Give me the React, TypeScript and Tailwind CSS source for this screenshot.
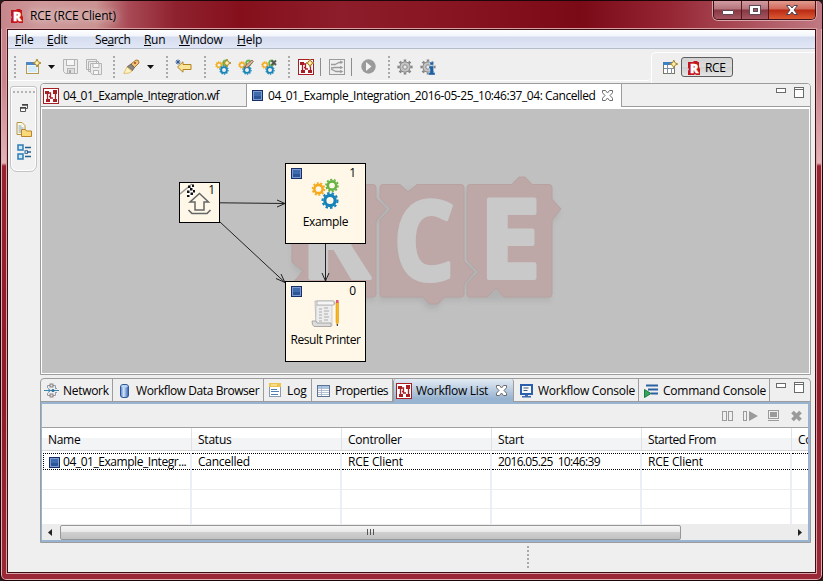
import React from "react";

type KidProps = { className?: string; children?: React.ReactNode };

/* ---------- icons ---------- */

const RceLogo = ({ className = "w-[14px] h-[16px]" }: KidProps) => (
  <svg className={className} viewBox="0 0 14 16">
    <path d="M1 2h5l1-1h3l1 1h1v5l1 2v6H9l-1-1-1 1H1v-4l1-2-1-1z" fill="#c4161c" />
    <text x="3" y="13" fontFamily="Open Sans, sans-serif" fontWeight="800" fontSize="13" fill="#fff" stroke="#fff" strokeWidth=".4" textLength="8.500" lengthAdjust="spacingAndGlyphs">R</text>
  </svg>
);

const WfIcon = ({ star = false }: { star?: boolean }) => (
  <svg className="h-4 w-4 shrink-0" viewBox="0 0 16 16">
    <rect x=".5" y=".5" width="15" height="15" fill="#fff" stroke="#a81e25" />
    <path d="M2 3h4v3H2zM10 2h4v4h-4zM3 11h4v3H3zM10 11h4v3h-4z" fill="#a81e25" />
    <path d="M4.500 6v5M6 5h1.500v5H10M12.500 6v5M6 8.500h2" stroke="#a81e25" strokeWidth="1.300" fill="none" />
    {star && <Star x={12} y={4} />}
  </svg>
);

const Star = ({ x, y }: { x: number; y: number }) => (
  <g transform={`translate(${x} ${y})`}>
    <path d="M0-4L1.2-1.2 4 0 1.2 1.2 0 4-1.2 1.2-4 0-1.2-1.2z" fill="#fff3b0" stroke="#a9842a" strokeWidth="1" />
  </g>
);

const BlueStop = () => (
  <svg className="h-[11px] w-[11px] shrink-0" viewBox="0 0 11 11">
    <rect x=".5" y=".5" width="10" height="10" fill="#2b5597" stroke="#152e66" />
    <rect x="1.5" y="1.5" width="8" height="8" fill="none" stroke="#7d9bd0" />
    <rect x="2" y="2" width="7" height="4" fill="#3f6bad" />
  </svg>
);

const CloseX = ({ fill = "#fff" }: { fill?: string }) => (
  <svg className="h-[11px] w-[11px] shrink-0" viewBox="0 0 11 11">
    <path d="M.5.5h3l2 2.5L7.5.5h3v2.3L8 5.5l2.500 2.700v2.300h-3L5.500 8l-2 2.500h-3V8.200L3 5.500.5 2.800z" fill={fill} stroke="#6b6b6b" />
  </svg>
);

const Cog = ({ x, y, s, color }: { x: number; y: number; s: number; color: string }) => (
  <g transform={`translate(${x} ${y}) scale(${s})`} fill="none" stroke={color}>
    <circle r="4.500" strokeWidth="2.800" />
    <circle r="6.500" strokeWidth="1.800" pathLength="20" strokeDasharray="1.100 .9" />
  </g>
);

const Gears = ({ kind }: { kind: "add" | "edit" | "remove" }) => (
  <svg className="h-4 w-4" viewBox="0 0 16 16">
    <Cog x={4} y={6} s={0.52} color="#f4ac1c" />
    <Cog x={10.500} y={4} s={0.5} color="#66b245" />
    <Cog x={9} y={11} s={0.64} color="#1684b8" />
    {kind === "add" && <Star x={12} y={4} />}
    {kind === "edit" && <path d="M7 9l1-3 6-5 1.500 1.500L10 8z" fill="#d8b098" stroke="#8d5a45" strokeWidth=".8" />}
    {kind === "remove" && <path d="M10.500 1.500l4.500 4.500M15 1.500L10.500 6" stroke="#555" strokeWidth="1.800" />}
  </svg>
);

const GrayGear = ({ info = false }: { info?: boolean }) => (
  <svg className="h-4 w-4" viewBox="0 0 16 16">
    <g transform="translate(8 8)">
      <circle r="6.500" fill="none" stroke="#858585" strokeWidth="2.200" pathLength="16" strokeDasharray="1 1" strokeDashoffset=".5" />
      <circle r="5.200" fill="#c4c4c4" stroke="#858585" />
      <circle r="2.200" fill="#e8e8e8" stroke="#8a8a8a" />
    </g>
    {info && <path d="M10 3h3.500v3H10zM9 7h4.500v6.500H15V16H8.500v-2.500H10V9.500H9z" fill="#1b5fa5" stroke="#dfe9f2" strokeWidth=".4" />}
  </svg>
);

const NewIcon = () => (
  <svg className="h-4 w-[15px]" viewBox="0 0 15 16">
    <rect x=".5" y="3.500" width="12" height="11" fill="#eef6fc" stroke="#b89a4e" />
    <rect x="0" y="3" width="11" height="3" fill="#4a86c8" />
    <path d="M2 7h9v6H2z" fill="#d6ebf9" />
    <Star x={11} y={4} />
  </svg>
);

const SaveIcon = () => (
  <svg className="h-[15px] w-[15px]" viewBox="0 0 15 15">
    <path d="M.5.5h14v14H2.500l-2-2z" fill="#ececec" stroke="#b4b4b4" />
    <rect x="3.500" y=".5" width="8" height="6" fill="#f6f6f6" stroke="#b4b4b4" />
    <rect x="4.500" y="9.500" width="7" height="5" fill="#dedede" stroke="#b4b4b4" />
    <path d="M6 11h2v3H6z" fill="#aaa" />
  </svg>
);

const SaveAllIcon = () => (
  <svg className="h-4 w-4" viewBox="0 0 16 16">
    <path d="M.5.5h10v10H.5zM2.500 2.500h10v10h-10z" fill="#ececec" stroke="#b4b4b4" />
    <path d="M4.500 4.500h11v11h-9l-2-2z" fill="#ececec" stroke="#b4b4b4" />
    <path d="M7 4.500h6v4H7zM7.500 11.500h5v4h-5z" fill="#f8f8f8" stroke="#b4b4b4" />
  </svg>
);

const TorchIcon = () => (
  <svg className="h-4 w-[17px]" viewBox="0 0 17 16">
    <path d="M8 5l5-4 2.500.5.5 2.500-5 5z" fill="#f1c27c" stroke="#a9762f" />
    <path d="M4 8l4-3 3.500 3.500L9 12z" fill="#8a847e" stroke="#6e655b" />
    <path d="M4 8L.8 14.500 6 14l3-2z" fill="#fff2bf" stroke="#d9b25c" strokeWidth=".8" />
    <circle cx="12" cy="4" r="1" fill="#a5461e" />
  </svg>
);

const BackIcon = () => (
  <svg className="h-[15px] w-[17px]" viewBox="0 0 17 15">
    <path d="M2.500 8L8 2.800V5.500h8v5H8v2.700z" fill="#fbe39a" stroke="#b08421" />
    <path d="M3 .5v5M.5 3h5M1.200 1.200l3.600 3.600M4.800 1.200L1.200 4.800" stroke="#274f8f" strokeWidth=".9" />
  </svg>
);

const CondIcon = () => (
  <svg className="h-4 w-4" viewBox="0 0 16 16">
    <rect x=".5" y=".5" width="15" height="15" fill="#efefef" stroke="#9b9b9b" />
    <path d="M2 5.500h4l4-2h3M2 9l4-.5h7M2 10l5 2.500h6" stroke="#9b9b9b" fill="none" strokeWidth="1.300" />
    <path d="M11 1.500l3.500 1.500-3 2zM11 7l3.500 1.500L11 10zM11 11l3.500 1.500L11 14z" fill="#9b9b9b" />
  </svg>
);

const RunIcon = () => (
  <svg className="h-[15px] w-[15px]" viewBox="0 0 15 15">
    <circle cx="7.500" cy="7.500" r="7.200" fill="#9a9a9a" />
    <path d="M5 3l5.500 4.500L5 12z" fill="#f4f4f4" />
  </svg>
);

const PerspectiveIcon = () => (
  <svg className="h-[15px] w-[15px]" viewBox="0 0 15 15">
    <rect x=".5" y="2.500" width="11" height="11" fill="#fff" stroke="#7b7866" />
    <rect x="0" y="2" width="9" height="3" fill="#3f7fc4" />
    <path d="M4.500 5v9M1 8.500h11M8.500 8.500V14" stroke="#7b8fa0" fill="none" />
    <Star x={10.800} y={4} />
  </svg>
);

const NetworkIcon = () => (
  <svg className="h-[15px] w-[15px]" viewBox="0 0 15 15">
    <path d="M3.500 5V2.500H6M11.500 5V2.500H9M3.500 10v2.500H6M11.500 10v2.500H9" stroke="#8f9fae" fill="none" />
    <path d="M0 7.500h15" stroke="#3d85ad" fill="none" />
    <path d="M4 5.500l2.500 2-2.500 2" stroke="#3d85ad" fill="none" />
    <rect x="6" y="1" width="3" height="3" fill="#ddd" stroke="#7c6a66" strokeWidth=".8" />
    <rect x="6" y="11" width="3" height="3" fill="#ddd" stroke="#7c6a66" strokeWidth=".8" />
    <circle cx="9" cy="7.500" r="1.500" fill="#246c99" />
    <path d="M11 5.500h2M11 9.500h2" stroke="#8f9fae" />
  </svg>
);

const DbIcon = () => (
  <svg className="h-[14px] w-[9px]" viewBox="0 0 9 14">
    <defs>
      <linearGradient id="db" x1="0" x2="1">
        <stop offset="0" stopColor="#4a7dc8" /><stop offset=".4" stopColor="#d5e5fa" /><stop offset="1" stopColor="#2c5cae" />
      </linearGradient>
    </defs>
    <rect x=".5" y=".5" width="8" height="13" rx="2.500" fill="url(#db)" stroke="#2e5697" />
    <ellipse cx="4.500" cy="2.300" rx="3.300" ry="1.200" fill="#bcd5f5" />
  </svg>
);

const LogIcon = () => (
  <svg className="h-[15px] w-[12px]" viewBox="0 0 12 15">
    <rect x=".5" y=".5" width="11" height="13" fill="#fff" stroke="#8b9cae" />
    <path d="M0 0h12v4H0z" fill="#edc54d" />
    <path d="M2 2h6" stroke="#fff6cf" />
    <path d="M2 6.500h6M2 8.500h8M2 11.500h7" stroke="#4d7fb5" />
  </svg>
);

const PropIcon = () => (
  <svg className="h-[12px] w-[13px]" viewBox="0 0 13 12">
    <rect x=".5" y=".5" width="12" height="11" fill="#fff" stroke="#5e7391" />
    <path d="M1 1h11v2H1z" fill="#a9c4e4" />
    <path d="M1 3.500h11M1 5.500h11M1 7.500h11M1 9.500h11M4.500 1v10" stroke="#9fb1c7" strokeWidth=".8" />
  </svg>
);

const ConsoleIcon = () => (
  <svg className="h-[14px] w-[13px]" viewBox="0 0 13 14">
    <rect x="1" y="1" width="11" height="9" fill="#f4f8fd" stroke="#2d5faf" strokeWidth="2" />
    <path d="M3.500 4h5M3.500 6.500h4" stroke="#44576f" />
    <path d="M5 10.500h3v1.500h3v1.500H2V12h3z" fill="#3c69ac" />
  </svg>
);

const CommandIcon = () => (
  <svg className="h-[14px] w-[15px]" viewBox="0 0 15 14">
    <path d="M2 1.500h12M4 5.500h10M7 9.500h7" stroke="#2c62a3" strokeWidth="2" />
    <path d="M.5 5.500L7 9.500l-6.500 4z" fill="#37a35f" stroke="#1e7a40" />
  </svg>
);

const MinMax = () => (
  <div className="ml-auto flex gap-[8px] pr-[6px] pt-[3px]">
    <div className="mt-px h-[5px] w-[10px] border border-[#6a6a6a] bg-white" />
    <div className="h-[11px] w-[10px] border border-t-[3px] border-[#6a6a6a] border-t-[#6a6a6a] bg-white">
      <div className="-mt-[2px] h-px bg-white" />
    </div>
  </div>
);

/* ---------- title bar ---------- */

const TitleBar = () => (
  <div className="flex h-[29px] items-start bg-[linear-gradient(90deg,#c5868b_0px,#cf999a_40px,#cb9392_95px,#a84955_128px,#8f212e_175px,#85101c_240px,#8d1d2a_340px,#861420_470px,#7a0a16_580px,#962634_670px,#c07a83_823px)]">
    <div className="flex h-full flex-1 items-center pl-[9px] pt-[2px]">
      <RceLogo />
      <span className="ml-[6px] tracking-[-0.17px] [text-shadow:0_0_6px_#fff9,0_0_10px_#fff9]">RCE (RCE Client)</span>
    </div>
    <div className="mr-[6px] flex h-[20px] w-[103px] overflow-hidden rounded-b-[5px] border border-t-0 border-[#3e1218] shadow-[0_0_0_1px_#d9a5aa]">
      <div className="flex w-[28px] items-center justify-center border-r border-[#4d1a20] bg-[linear-gradient(#d5a1a6_0%,#b4747b_48%,#873642_52%,#a65661_100%)]">
        <div className="mt-[6px] h-[5px] w-[12px] rounded-[1px] border border-[#5b4a55] bg-white" />
      </div>
      <div className="flex w-[27px] items-center justify-center border-r border-[#4d1a20] bg-[linear-gradient(#d5a1a6_0%,#b4747b_48%,#873642_52%,#a65661_100%)]">
        <div className="flex h-[10px] w-[12px] items-center justify-center border border-[#5b4a55] bg-white">
          <div className="h-[4px] w-[5px] border border-[#5b4a55] bg-[#9b5a62]" />
        </div>
      </div>
      <div className="flex flex-1 items-center justify-center bg-[linear-gradient(#e4a196_0%,#d0685a_48%,#b92812_52%,#dc5a34_100%)]">
        <svg className="h-[10px] w-[12px]" viewBox="0 0 12 10">
          <path d="M.5.5h3.500L6 3 8 .5h3.500L8 5l3.500 4.500H8L6 7 4 9.500H.5L4 5z" fill="#fff" stroke="#4d4450" />
        </svg>
      </div>
    </div>
  </div>
);

/* ---------- menu and tool bars ---------- */

const MenuItem = ({ className, children }: KidProps) => <div className={className}>{children}</div>;

const MenuBar = () => (
  <div className="flex h-[19px] items-center border-b border-[#b5bccc] bg-[linear-gradient(#ffffff_0px,#f2f5fb_6px,#d5dcef_7px,#e1e7f5_18px)] pl-[7px] pt-[2px]">
    <MenuItem className="w-[32px] tracking-[-0.1px]"><u>F</u>ile</MenuItem>
    <MenuItem className="w-[48px] tracking-[-0.3px]"><u>E</u>dit</MenuItem>
    <MenuItem className="w-[49px] tracking-[-0.45px]">Se<u>a</u>rch</MenuItem>
    <MenuItem className="w-[35px] tracking-[-0.3px]"><u>R</u>un</MenuItem>
    <MenuItem className="w-[58px] tracking-[-0.3px]"><u>W</u>indow</MenuItem>
    <MenuItem className="tracking-[-0.2px]"><u>H</u>elp</MenuItem>
  </div>
);

const Grip = ({ className = "" }: KidProps) => (
  <div className={`shrink-0 h-[22px] w-[2px] bg-[repeating-linear-gradient(#a9a9a9_0px,#a9a9a9_2px,transparent_2px,transparent_4px)] ${className}`} />
);

const Caret = () => (
  <svg className="h-[4px] w-[7px]" viewBox="0 0 7 4"><path d="M0 0h7L3.500 4z" fill="#111" /></svg>
);

const Slot = ({ className, children }: KidProps) => (
  <div className={`flex shrink-0 items-center ${className}`}>{children}</div>
);

const ToolBar = () => (
  <div className="flex h-[34px]">
    <div className="flex h-[32px] w-[643px] items-center rounded-br-[4px] border-b border-white pl-[6px] pt-[4px]">
      <Slot className="w-[12px]"><Grip /></Slot>
      <Slot className="w-[22px]"><NewIcon /></Slot>
      <Slot className="w-[15px]"><Caret /></Slot>
      <Slot className="w-[23px]"><SaveIcon /></Slot>
      <Slot className="w-[27px]"><SaveAllIcon /></Slot>
      <Slot className="w-[10px]"><Grip /></Slot>
      <Slot className="w-[24px]"><TorchIcon /></Slot>
      <Slot className="w-[19px]"><Caret /></Slot>
      <Slot className="w-[9px]"><Grip /></Slot>
      <Slot className="w-[29px]"><BackIcon /></Slot>
      <Slot className="w-[11px]"><Grip /></Slot>
      <Slot className="w-[23px]"><Gears kind="add" /></Slot>
      <Slot className="w-[23px]"><Gears kind="edit" /></Slot>
      <Slot className="w-[27px]"><Gears kind="remove" /></Slot>
      <Slot className="w-[10px]"><Grip /></Slot>
      <Slot className="w-[22px]"><WfIcon star /></Slot>
      <Slot className="w-[9px]"><div className="h-[18px] w-px bg-[#8d8d8d]" /></Slot>
      <Slot className="w-[22px]"><CondIcon /></Slot>
      <Slot className="w-[10px]"><div className="h-[18px] w-px bg-[#8d8d8d]" /></Slot>
      <Slot className="w-[27px]"><RunIcon /></Slot>
      <Slot className="w-[9px]"><Grip /></Slot>
      <Slot className="w-[23px]"><GrayGear /></Slot>
      <Slot className="w-[16px]"><GrayGear info /></Slot>
    </div>
    <div className="mt-[3px] flex flex-1 items-start rounded-tl-[5px] border-l border-t border-white pl-[11px] pt-[4px]">
      <div className="mt-[3px]"><PerspectiveIcon /></div>
      <div className="ml-[3px] flex h-[20px] w-[52px] items-center rounded-[3px] border border-[#5e5e5e] bg-[linear-gradient(#d2d2d2,#dcdcdc_50%,#cfcfcf_52%,#e6e6e6)] pl-[5px]">
        <div className="mt-[2px]"><RceLogo /></div>
        <span className="ml-[4px] mt-px tracking-[-0.4px]">RCE</span>
      </div>
    </div>
  </div>
);

/* ---------- left trim ---------- */

const FastView = () => (
  <div className="ml-[2px] mt-[3px] flex h-[86px] w-[27px] shrink-0 flex-col items-center rounded-[7px] rounded-t-[3px] border border-[#c3c3c3] bg-[#f1f1f1] shadow-[inset_0_0_0_1px_#fff]">
    <div className="mt-[4px] h-[2px] w-[22px] bg-[repeating-linear-gradient(90deg,#b5b5b5_0px,#b5b5b5_2px,transparent_2px,transparent_4px)]" />
    <svg className="mt-[11px] h-[8px] w-[8px]" viewBox="0 0 8 8">
      <path d="M2.500 1h5v3.500H6" fill="none" stroke="#555" /><path d="M2 .8h6" stroke="#444" strokeWidth="1.500" />
      <path d="M.5 4h5v3.500h-5z" fill="#fff" stroke="#555" /><path d="M0 3.800h6" stroke="#444" strokeWidth="1.500" />
    </svg>
    <svg className="mt-[10px] h-[16px] w-[16px]" viewBox="0 0 16 16">
      <path d="M1 .5h5l3 3v9H1z" fill="#fffbe8" stroke="#b49543" />
      <path d="M2.500 4h3M2.500 6h5M2.500 8h4M2.500 10h3" stroke="#7d9cc0" />
      <path d="M5.500 14.500v-7h4l1 1.500h5v5.500z" fill="#fcd978" stroke="#b9862c" />
    </svg>
    <svg className="mt-[6px] h-[16px] w-[14px]" viewBox="0 0 14 16">
      <rect x="1" y="1" width="5" height="5" fill="#cfe9fa" stroke="#2d7cb5" strokeWidth="1.500" />
      <rect x="1" y="10" width="5" height="5" fill="#cfe9fa" stroke="#2d7cb5" strokeWidth="1.500" />
      <path d="M8 3.500h6M8 12.500h6M11 8h3" stroke="#235f91" strokeWidth="1.400" />
      <rect x="8" y="6.800" width="2.500" height="2.500" fill="#fff" stroke="#235f91" />
    </svg>
  </div>
);

/* ---------- workflow editor ---------- */

const Watermark = () => (
  <g>
    <g fill="#9a9a9a" opacity=".35" style={{ filter: "blur(2.5px)" }} transform="translate(-1 4)">
      <path d="M293 186H376V198L386 209L376 221V297H293V283L303 271L293 263zM380 186H464V260L474 272L464 284V297H444L438 305H428L422 297H380zM467 186H512L519 177H526L532 186H552V198L561 209L552 221V297H467z" />
    </g>
    <g fill="#bda7a7" stroke="#b8a1a1" strokeWidth="1" strokeLinejoin="round">
      <path d="M295 184.500H373Q376 184.500 376 187.500V198L386 209L376 221V294Q376 297 373 297H295Q292 297 292 294V284L303 271L292 262V187.500Q292 184.500 295 184.500z" />
      <path d="M383 184.500H400L408 192L417 184.500H461Q464 184.500 464 187.500V261L474 272L464 284V294Q464 297 461 297H444L438 304H429L423 297H383Q380 297 380 294V220L391 209L380 198V187.500Q380 184.500 383 184.500z" />
      <path d="M470 184.500H512L519 177H525L532 184.500H549Q552 184.500 552 187.500V199L561 209L552 220V294Q552 297 549 297H504L496 288L487 297H470Q467 297 467 294V284L479 272L467 260V187.500Q467 184.500 470 184.500z" />
    </g>
    <g fontFamily="Open Sans, sans-serif" fontWeight="700" fill="#c9c9c9" stroke="#c9c9c9" strokeWidth="4" strokeLinejoin="round" fontSize="110">
      <text x="301" y="278" textLength="69" lengthAdjust="spacingAndGlyphs">R</text>
      <text x="393.500" y="279.500" textLength="61" lengthAdjust="spacingAndGlyphs">C</text>
      <text x="479" y="277.500" textLength="62" lengthAdjust="spacingAndGlyphs">E</text>
    </g>
  </g>
);

const BigNode = ({ className, count, label, children }: KidProps & { count: number; label: React.ReactNode }) => (
  <div className={`absolute h-[81px] w-[81px] border border-black bg-[#fff8e9] ${className}`}>
    <div className="flex h-[14px] items-start justify-between pl-[5px] pr-[9px]">
      <div className="pt-[4px]"><BlueStop /></div>
      <span className="leading-[17px]">{count}</span>
    </div>
    <div className="flex h-[34px] justify-center">{children}</div>
    <div className="whitespace-nowrap text-center leading-[20px]">{label}</div>
  </div>
);

const Canvas = () => (
  <div className="relative mx-[1px] mb-[1px] mt-[2px] h-[263px] flex-1 overflow-hidden bg-[#c0c0c0]">
    <svg className="absolute left-0 top-0 h-[263px] w-[767px]" viewBox="42 109 767 263">
      <Watermark />
      <g stroke="#222" fill="none" strokeWidth="1">
        <path d="M220 202.800L285 203.500M277 200l8 3.500-8 3.500" />
        <path d="M220 222L285 282.500M276 278.500l9 4-4-8.500" />
        <path d="M325.500 244V281M322 273l3.500 8 3.500-8" />
      </g>
    </svg>
    <div className="absolute left-[137px] top-[73px] h-[41px] w-[41px] border border-black bg-[#fff8e9]">
      <svg className="absolute left-0 top-0 h-[39px] w-[39px]" viewBox="0 0 39 39">
        <path d="M0 11L12 1" stroke="#999" strokeWidth="1.500" />
        <path d="M8 3l6-1-1 4 2 3-3 5-5-1 1-5z" fill="#fff" />
        <path d="M8 2.500h2.500V5H8zM12 1.500h2V4h-2zM10 5h2.500v2.500H10zM13 7h2v2.500h-2zM7 7.500h2.500V10H7zM10.500 9.500H13V12h-2.500zM7 12h2.500v2H7z" fill="#111" />
        <path d="M19.500 10.500L28.500 19H24v8h-9v-8h-5z" fill="#fff8e9" stroke="#666" strokeWidth="1.500" />
        <path d="M8.500 27l3.500 3.500h15l3.500-3.500" fill="none" stroke="#666" strokeWidth="1.700" />
      </svg>
      <span className="absolute right-[4px] top-[-2px] leading-[17px]">1</span>
    </div>
    <BigNode className="left-[243px] top-[54px]" count={1} label={<span className="tracking-[-0.35px]">Example</span>}>
      <svg className="h-[34px] w-[34px]" viewBox="0 0 34 34">
        <Cog x={9.500} y={11} s={0.92} color="#f6a91d" />
        <Cog x={23} y={7.500} s={0.92} color="#68b345" />
        <Cog x={21} y={22.500} s={1.150} color="#1684ba" />
      </svg>
    </BigNode>
    <BigNode className="left-[243px] top-[172px]" count={0} label={<span className="tracking-[-0.45px]">Result Printer</span>}>
      <svg className="h-[34px] w-[34px]" viewBox="0 0 34 34">
        <path d="M6 5h18q2 0 2 3H9v20H7z" fill="#e9e9e9" stroke="#b0b0b0" strokeWidth=".8" />
        <path d="M7 9h16v21H7z" fill="#ededed" stroke="#c5c5c5" strokeWidth=".8" />
        <path d="M8 5h17v4H8z" fill="#f6f6f6" stroke="#aaa" strokeWidth=".8" />
        <path d="M3 25h4l1 2h14v3.500H5q-2-1-2-5.500z" fill="#dcdcdc" stroke="#9a9a9a" strokeWidth=".8" />
        <path d="M10 13h3M15 12h4M10 16h3M15 15h5M10 19h3M15 18h4M10 22h3M15 21h5M10 25h3M15 24h4" stroke="#aaa" />
        <path d="M27 6h2.500v20l-1.200 3L27 26z" fill="#f6b81e" stroke="#d18c14" strokeWidth=".5" />
        <path d="M27 4h2.500v3H27z" fill="#e0566c" /><path d="M27.800 28h1v2h-1z" fill="#222" />
      </svg>
    </BigNode>
  </div>
);

const Editor = () => (
  <div className="flex h-[292px] flex-col rounded-t-[4px] border border-[#9c9c9c] bg-white">
    <div className="flex h-[23px] shrink-0 rounded-t-[3px] border-b border-[#9c9c9c] bg-[#efefef]">
      <div className="flex w-[205px] items-center pl-[2px] pt-px">
        <WfIcon />
        <span className="ml-[4px] tracking-[-0.47px]">04_01_Example_Integration.wf</span>
      </div>
      <div className="-mb-px flex w-[376px] items-center border-x border-[#9c9c9c] bg-white pl-[5px]">
        <BlueStop />
        <span className="ml-[5px] w-[334px] whitespace-nowrap tracking-[-0.43px]">04_01_Example_Integration_2016-05-25_10:46:37_04: Cancelled</span>
        <CloseX />
      </div>
      <MinMax />
    </div>
    <Canvas />
  </div>
);

/* ---------- bottom views ---------- */

const ViewTab = ({ className, children }: KidProps) => (
  <div className={`flex shrink-0 items-center whitespace-nowrap border-r border-[#9c9c9c] pt-px ${className}`}>{children}</div>
);

const Icon = ({ className, children }: KidProps) => <div className={`shrink-0 ${className}`}>{children}</div>;

const ViewTabs = () => (
  <div className="flex h-[23px] shrink-0 rounded-t-[3px] border-b border-[#9c9c9c]">
    <ViewTab className="w-[72px] pl-[3px] tracking-[-0.3px]"><Icon className="w-[19px]"><NetworkIcon /></Icon>Network</ViewTab>
    <ViewTab className="w-[151px] pl-[7px] tracking-[-0.43px]"><Icon className="w-[16px]"><DbIcon /></Icon>Workflow Data Browser</ViewTab>
    <ViewTab className="w-[48px] pl-[5px] tracking-[-0.1px]"><Icon className="w-[18px]"><LogIcon /></Icon>Log</ViewTab>
    <ViewTab className="w-[81px] pl-[5px] tracking-[-0.5px]"><Icon className="w-[18px]"><PropIcon /></Icon>Properties</ViewTab>
    <ViewTab className="-mb-px w-[121px] rounded-t-[3px] border-l bg-[linear-gradient(#e3ebf4,#99b4d1_85%)] pb-px pl-[2px] tracking-[-0.26px]">
      <Icon className="w-[20px]"><WfIcon /></Icon><span className="w-[80px]">Workflow List</span><CloseX />
    </ViewTab>
    <ViewTab className="w-[125px] pl-[6px] tracking-[-0.26px]"><Icon className="w-[18px]"><ConsoleIcon /></Icon>Workflow Console</ViewTab>
    <ViewTab className="w-[131px] pl-[5px] tracking-[-0.22px]"><Icon className="w-[19px]"><CommandIcon /></Icon>Command Console</ViewTab>
    <MinMax />
  </div>
);

const ViewToolbar = () => (
  <div className="flex h-[24px] shrink-0 items-center border-b border-[#a0a0a0] bg-[#efefef] pl-[680px]">
    <svg className="h-[12px] w-[84px]" viewBox="0 0 84 12">
      <g fill="none" stroke="#9a9a9a">
        <rect x=".5" y="1.500" width="4" height="9" /><rect x="6.500" y="1.500" width="4" height="9" />
        <rect x="21.500" y="1.500" width="3" height="9" />
      </g>
      <path d="M27 1l9 5-9 5z" fill="#9a9a9a" />
      <rect x="46.500" y=".5" width="10" height="8" fill="#efefef" stroke="#9a9a9a" />
      <rect x="48" y="2" width="7" height="5" fill="#9a9a9a" /><path d="M46 10.500h11" stroke="#9a9a9a" />
      <path d="M70.500 2l8 8M78.500 2l-8 8" stroke="#9a9a9a" strokeWidth="3.800" />
    </svg>
  </div>
);

const columns = ["Name", "Status", "Controller", "Start", "Started From", "Co"];
const record = ["04_01_Example_Integr...", "Cancelled", "RCE Client", "2016.05.25  10:46:39", "RCE Client", ""];
const tracking = ["tracking-[-0.45px]", "tracking-[-0.26px]", "tracking-[-0.2px]", "tracking-[-0.65px]", "tracking-[-0.2px]", ""];
const headTracking = ["tracking-[-0.3px]", "tracking-[-0.22px]", "tracking-[-0.25px]", "tracking-[-0.2px]", "tracking-[-0.45px]", "tracking-[-0.4px]"];
const grid = "grid grid-cols-[150px_150px_150px_150px_150px_16px]";
const cell = "border-r-2 border-[#e9eef7] last:border-r-0";

const Table = () => (
  <div className="h-[96px] shrink-0 overflow-hidden bg-white">
    <div className={`${grid} mb-px h-[23px] border-b border-[#d5d5d5] bg-[linear-gradient(#ffffff_45%,#f3f4f6_46%,#f3f4f6)]`}>
      {columns.map((c, i) => (
        <div key={i} className={`overflow-hidden whitespace-nowrap border-r border-[#dfe1e5] last:border-r-0 pl-[6px] pt-[4px] leading-[16px] ${headTracking[i]}`}>{c}</div>
      ))}
    </div>
    <div className={`${grid} h-[19px] pt-px`}>
      {record.map((c, i) => (
        <div key={i} className={cell}>
          <div className={`flex h-[17px] items-center overflow-hidden whitespace-pre border-y border-dotted border-black pt-px ${tracking[i]} ${i === 0 ? "ml-px border-l pl-[5px]" : "pl-[6px]"}`}>
            {i === 0 && <div className="mr-[3px]"><BlueStop /></div>}
            {c}
          </div>
        </div>
      ))}
    </div>
    {[0, 1, 2].map((r) => (
      <div key={r} className={`${grid} h-[19px] border-b border-[#ededed]`}>
        {columns.map((c) => <div key={c} className={cell} />)}
      </div>
    ))}
  </div>
);

const HScroll = () => (
  <div className="flex h-[16px] shrink-0 items-center bg-[#ececec]">
    <div className="flex w-[18px] justify-center pr-[2px]"><svg className="h-[7px] w-[4px]" viewBox="0 0 4 7"><path d="M4 0v7L0 3.500z" fill="#222" /></svg></div>
    <div className="flex h-[15px] w-[621px] items-center justify-center gap-[2px] rounded-[2px] border border-[#979797] bg-[linear-gradient(#f5f5f5,#e8e8e8_48%,#cfcfcf_50%,#c2c2c2)]">
      <div className="h-[6px] w-px bg-[#555]" /><div className="h-[6px] w-px bg-[#555]" /><div className="h-[6px] w-px bg-[#555]" />
    </div>
    <div className="ml-auto mr-[6px]"><svg className="h-[7px] w-[4px]" viewBox="0 0 4 7"><path d="M0 0v7l4-3.500z" fill="#222" /></svg></div>
  </div>
);

const Views = () => (
  <div className="mt-[3px] flex h-[165px] flex-col rounded-t-[4px] border border-[#9c9c9c] bg-[#efefef]">
    <ViewTabs />
    <div className="flex flex-1 flex-col border-[#99b4d1] border-b-2 border-l border-r-2 border-t-2">
      <ViewToolbar />
      <Table />
      <HScroll />
    </div>
  </div>
);

/* ---------- window ---------- */

export default function App() {
  return (
    <div className="h-[581px] w-[823px] overflow-hidden bg-[#2a1a1a] font-['Open_Sans','Noto_Sans',sans-serif] text-[12px] leading-[16px] text-black">
      <div className="h-full rounded-[6px] border border-[#1a0508] bg-[linear-gradient(#c4828a_0px,#c9858c_80px,#e3b3b6_162px,#98212f_165px,#8f1b28_400px,#9b2836)] shadow-[inset_0_0_0_1px_#e0b0b4] overflow-hidden">
        <div className="-mt-px">
          <TitleBar />
        </div>
        <div className="ml-[6px] flex h-[544px] w-[809px] flex-col border border-[#3d0d14] bg-[#efefef] shadow-[0_0_0_1px_#d9a0a6]">
          <MenuBar />
          <ToolBar />
          <div className="flex">
            <FastView />
            <div className="ml-[3px] w-[771px]">
              <Editor />
              <Views />
              <Grip className="ml-[487px] mt-[3px]" />
            </div>
          </div>
        </div>
      </div>
    </div>
  );
}
